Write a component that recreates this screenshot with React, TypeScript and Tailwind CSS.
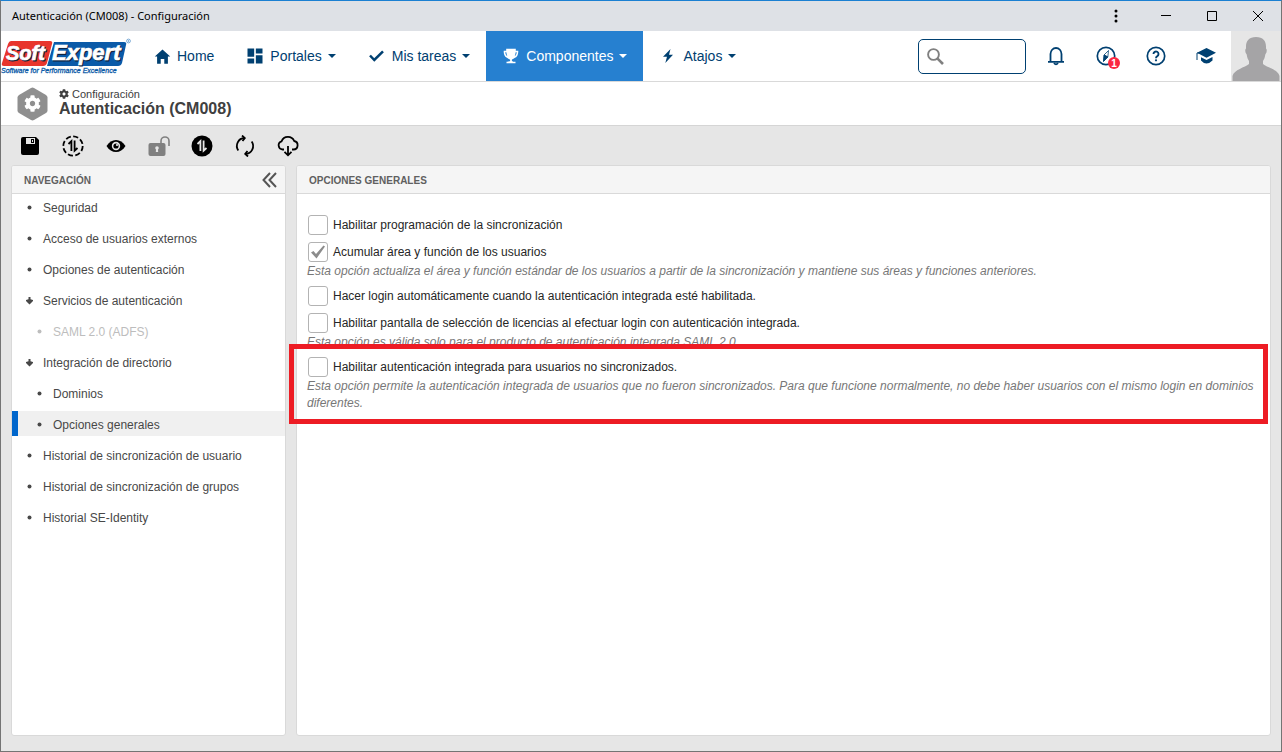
import * as React from "react";
import clsx from "clsx";
import { FaCog } from "react-icons/fa";
import { IoMdHome, IoMdTrophy } from "react-icons/io";
import { MdDashboard } from "react-icons/md";

type MenuItem = { label: string; icon: React.ReactNode; caret?: boolean; active?: boolean };
type NavItem = { label: string; sub?: boolean; open?: boolean; disabled?: boolean; active?: boolean };
type Option = { id: string; label: string; checked?: boolean; help?: string; highlight?: boolean };

const menu: MenuItem[] = [
  { label: "Home", icon: <IoMdHome size={19} /> },
  { label: "Portales", icon: <MdDashboard size={20} />, caret: true },
  {
    label: "Mis tareas",
    icon: (
      <svg width="15" height="12" viewBox="0 0 15 12" fill="none" stroke="currentColor" strokeWidth="2.5">
        <path d="M1 5.500l4.300 4.500L14 1.300" />
      </svg>
    ),
    caret: true,
  },
  { label: "Componentes", icon: <IoMdTrophy size={18} />, caret: true, active: true },
  {
    label: "Atajos",
    icon: (
      <svg width="10" height="14" viewBox="0 0 10 14" fill="currentColor">
        <path d="M7.500 0L0 7.800h4L2.300 14 10 5.800H6z" />
      </svg>
    ),
    caret: true,
  },
];

const navItems: NavItem[] = [
  { label: "Seguridad" },
  { label: "Acceso de usuarios externos" },
  { label: "Opciones de autenticación" },
  { label: "Servicios de autenticación", open: true },
  { label: "SAML 2.0 (ADFS)", sub: true, disabled: true },
  { label: "Integración de directorio", open: true },
  { label: "Dominios", sub: true },
  { label: "Opciones generales", sub: true, active: true },
  { label: "Historial de sincronización de usuario" },
  { label: "Historial de sincronización de grupos" },
  { label: "Historial SE-Identity" },
];

const options: Option[] = [
  { id: "schedule", label: "Habilitar programación de la sincronización" },
  {
    id: "accumulate",
    label: "Acumular área y función de los usuarios",
    checked: true,
    help: "Esta opción actualiza el área y función estándar de los usuarios a partir de la sincronización y mantiene sus áreas y funciones anteriores.",
  },
  { id: "autologin", label: "Hacer login automáticamente cuando la autenticación integrada esté habilitada." },
  {
    id: "license",
    label: "Habilitar pantalla de selección de licencias al efectuar login con autenticación integrada.",
    help: "Esta opción es válida solo para el producto de autenticación integrada SAML 2.0.",
  },
  {
    id: "unsynced",
    label: "Habilitar autenticación integrada para usuarios no sincronizados.",
    help: "Esta opción permite la autenticación integrada de usuarios que no fueron sincronizados. Para que funcione normalmente, no debe haber usuarios con el mismo login en dominios diferentes.",
    highlight: true,
  },
];

const tools: { label: string; disabled?: boolean; icon: React.ReactNode }[] = [
  {
    label: "Guardar",
    icon: (
      <svg width="20" height="20" viewBox="0 0 20 20">
        <path d="M3 1h13l3 3v13a2 2 0 0 1-2 2H3a2 2 0 0 1-2-2V3a2 2 0 0 1 2-2z" />
        <path d="M6 2h9v6H6z" fill="#e6e6e6" />
        <path d="M11 3h3v4h-3z" />
        <path d="M12 4h1v2h-1z" fill="#e6e6e6" />
      </svg>
    ),
  },
  {
    label: "Probar sincronización",
    icon: (
      <svg width="22" height="22" viewBox="0 0 22 22" fill="none" stroke="#000">
        <circle cx="11" cy="11" r="9.7" strokeWidth="1.8" strokeDasharray="5.2 2.4" />
        <path d="M6.500 9L9.400 6.200V16M12.600 5.500V15.700L15.500 13" strokeWidth="1.800" />
      </svg>
    ),
  },
  {
    label: "Visualizar",
    icon: (
      <svg width="20" height="14" viewBox="0 0 20 14">
        <path d="M0.500 7C3 3 6.300 1 10 1s7 2 9.500 6C17 11 13.700 13 10 13S3 11 .5 7z" />
        <circle cx="10" cy="7" r="4.200" fill="#e6e6e6" />
        <circle cx="10" cy="7" r="2.600" />
        <circle cx="11" cy="6" r="1.100" fill="#e6e6e6" />
      </svg>
    ),
  },
  {
    label: "Desbloquear",
    disabled: true,
    icon: (
      <svg width="22" height="20" viewBox="0 0 22 20">
        <path d="M13 8V5a4 4 0 0 1 8 0v5" fill="none" stroke="#808080" strokeWidth="1.600" />
        <rect x="0.500" y="7" width="17" height="13" rx="2" fill="#808080" />
        <circle cx="9" cy="12" r="1.800" fill="#e6e6e6" />
        <path d="M8.200 12h1.600l.4 4H7.800z" fill="#e6e6e6" />
      </svg>
    ),
  },
  {
    label: "Sincronizar",
    icon: (
      <svg width="22" height="22" viewBox="0 0 22 22">
        <circle cx="11" cy="11" r="10.500" />
        <path d="M6.500 9L9.400 6.200V16M12.600 5.500V15.700L15.500 13" fill="none" stroke="#e6e6e6" strokeWidth="1.800" />
      </svg>
    ),
  },
  {
    label: "Actualizar",
    icon: (
      <svg width="22" height="22" viewBox="0 0 22 22" fill="none" stroke="#000" strokeWidth="1.800">
        <path d="M4.300 15.500A8 8 0 0 1 10.500 3M17.700 6.500A8 8 0 0 1 11.500 19" />
        <path d="M8 .5L10.800 3 8.500 6M14 21.500L11.200 19l2.300-3" />
      </svg>
    ),
  },
  {
    label: "Descargar",
    icon: (
      <svg width="22" height="22" viewBox="0 0 22 22" fill="none" stroke="#000" strokeWidth="1.800">
        <path d="M7 14.500H5.500a4.200 4.200 0 0 1-.9-8.200A6.800 6.800 0 0 1 17.200 6a4.300 4.300 0 0 1-.7 8.500H15" />
        <path d="M11 11v9M7.500 16.800L11 20.300l3.500-3.500" />
      </svg>
    ),
  },
];

function TitleBar() {
  return (
    <div className="flex h-[30px] items-center bg-[#dee1e6] text-black">
      <h1 className="flex-1 pl-[11px] font-['Noto_Sans',sans-serif] text-[11px]">
        Autenticación (CM008) - Configuración
      </h1>
      <button aria-label="Menú" className="flex h-full w-[54px] items-center justify-center">
        <svg width="4" height="14" viewBox="0 0 4 14">
          <circle cx="2" cy="2" r="1.500" />
          <circle cx="2" cy="7" r="1.500" />
          <circle cx="2" cy="12" r="1.500" />
        </svg>
      </button>
      <button aria-label="Minimizar" className="flex h-full w-[46px] items-center justify-center">
        <svg width="10" height="10" viewBox="0 0 10 10">
          <path d="M0 4h10v1H0z" />
        </svg>
      </button>
      <button aria-label="Maximizar" className="flex h-full w-[46px] items-center justify-center">
        <svg width="10" height="10" viewBox="0 0 10 10" fill="none" stroke="#000">
          <path d="M.5.5h9v9h-9z" />
        </svg>
      </button>
      <button aria-label="Cerrar" className="flex h-full w-[46px] items-center justify-center">
        <svg width="10" height="10" viewBox="0 0 10 10" stroke="#000">
          <path d="M0 0l10 10M10 0L0 10" />
        </svg>
      </button>
    </div>
  );
}

function Logo() {
  return (
    <svg
      width="136"
      height="50"
      viewBox="1 31 136 50"
      role="img"
      aria-label="SoftExpert"
      fontFamily="Liberation Sans, sans-serif"
      fontStyle="italic"
    >
      <path d="M11 41h39q3 0 2 3l-5 19q-1 3-4 3H4q-3 0-2-3l6-19q1-3 3-3z" fill="#e8352c" />
      <path d="M54 42h70q3 0 2 3l-4 18q-1 3-4 3H47z" fill="#0a5aa8" />
      <g fontWeight="700" fill="#10233f" stroke="#10233f" strokeWidth="0.800">
        <text x="7" y="61" fontSize="20">Soft</text>
        <text x="53" y="61" fontSize="22">Expert</text>
      </g>
      <g fontWeight="700" fill="#fff" stroke="#fff" strokeWidth="0.700">
        <text x="6" y="60" fontSize="20">Soft</text>
        <text x="52" y="60" fontSize="22">Expert</text>
      </g>
      <text x="1" y="73" fontSize="7" fill="#0a5aa8" stroke="#0a5aa8" strokeWidth="0.300">
        Software for Performance Excellence
      </text>
      <circle cx="128.500" cy="41" r="1.900" fill="none" stroke="#4a8ac4" strokeWidth="0.700" />
      <circle cx="128.500" cy="41" r="0.700" fill="#4a8ac4" />
    </svg>
  );
}

function HeaderIcon({ label, children }: { label: string; children: React.ReactNode }) {
  return (
    <button aria-label={label} className="relative flex h-full w-[50px] items-center justify-center text-[#004071]">
      {children}
    </button>
  );
}

function Header() {
  return (
    <header className="flex h-[51px] items-stretch border-b border-[#d9d9d9] bg-white">
      <a href="#" className="w-[136px]">
        <Logo />
      </a>
      <nav className="flex flex-1 items-stretch">
        {menu.map((item) => (
          <a
            key={item.label}
            href="#"
            className={clsx(
              "flex items-center pr-4 pl-[17px] text-sm",
              item.active ? "bg-[#2680d0] text-white" : "text-[#004071]",
            )}
          >
            <span className="mr-[7px] flex w-4 justify-center [&>svg]:shrink-0">{item.icon}</span>
            {item.label}
            {item.caret && (
              <svg className="ml-1.5" width="8" height="4" viewBox="0 0 8 4" fill="currentColor">
                <path d="M0 0h8L4 4z" />
              </svg>
            )}
          </a>
        ))}
      </nav>
      <label className="mr-[5px] flex h-[35px] w-[108px] items-center self-center rounded-[5px] border border-[#004071] pl-2">
        <svg className="shrink-0" width="17" height="17" viewBox="0 0 17 17" fill="none" stroke="#808080">
          <circle cx="6.500" cy="6.500" r="5.400" strokeWidth="1.900" />
          <path d="M10.300 10.300l5.700 5.700" strokeWidth="2.600" />
        </svg>
        <input type="search" aria-label="Buscar" className="ml-1 w-full min-w-0 text-sm outline-none" />
      </label>
      <HeaderIcon label="Notificaciones">
        <svg width="18" height="20" viewBox="0 0 18 20" fill="none" stroke="currentColor" strokeWidth="1.800">
          <path d="M3.500 15.500V8a5.500 6 0 0 1 11 0v7.500M1 15.800h16" />
          <path d="M7 17q2 2.800 4 0" />
        </svg>
      </HeaderIcon>
      <HeaderIcon label="Explorar">
        <svg width="20" height="20" viewBox="0 0 20 20" fill="none" stroke="currentColor">
          <circle cx="10" cy="10" r="8.700" strokeWidth="1.700" />
          <path d="M12.500 4.500L11.800 11 8 9z" strokeWidth="0.800" />
          <path d="M7.500 15.500L8 9l3.800 2z" fill="currentColor" />
        </svg>
        <span className="absolute top-[26px] left-[27px] flex size-3 items-center justify-center rounded-full bg-[#fb2840] text-[10px] font-bold text-white">
          1
        </span>
      </HeaderIcon>
      <HeaderIcon label="Ayuda">
        <svg width="20" height="20" viewBox="0 0 20 20" fill="none" stroke="currentColor">
          <circle cx="10" cy="10" r="8.700" strokeWidth="1.700" />
          <path d="M7.500 8a2.500 2.500 0 1 1 3.800 2.100Q10 10.800 10 12.200" strokeWidth="1.900" />
          <circle cx="10" cy="14.300" r="1.100" fill="currentColor" stroke="none" />
        </svg>
      </HeaderIcon>
      <HeaderIcon label="Capacitación">
        <svg width="20" height="18" viewBox="0 0 20 18" fill="currentColor">
          <path d="M10.500 1L20 5.800l-9.500 5L1 5.800z" />
          <path d="M5 10.200l5.500 2.800 6-3v3.500q-3 3-6 3t-5.500-3z" />
          <path d="M.5 6h1v7h-1zM1 5.500h4v1H1z" />
        </svg>
      </HeaderIcon>
      <button aria-label="Usuario" className="w-[50px] bg-[#e6e6e6]">
        <svg width="50" height="50" viewBox="0 0 50 50" fill="#a5a4a6">
          <path d="M25 6c7 0 10 4 10 9.500v2c1.300 1 .8 4.500-.7 6-.5 3-1 4.500-2.300 6.500v3c4 3.500 15 5.500 16.500 12V50h-47v-5C3 38.500 14 36.500 18 33v-3c-1.300-2-1.800-3.500-2.300-6.500-1.500-1.500-2-5-.7-6v-2C15 10 18 6 25 6z" />
        </svg>
      </button>
    </header>
  );
}

function PageTitle() {
  return (
    <div className="flex h-11 items-center border-b border-[#d5d5d5] bg-white pl-4 text-[#404040]">
      <div className="grid w-[31px] place-items-center">
        <svg className="col-start-1 row-start-1" width="31" height="34" viewBox="0 0 31 34">
          <path
            d="M14 1q1.500-.8 3 0l12 7q1.500 1 1.500 2.500v13q0 1.500-1.500 2.500l-12 7q-1.500.8-3 0L2 26q-1.500-1-1.500-2.500v-13Q.5 9 2 8z"
            fill="#8f8f8f"
          />
        </svg>
        <FaCog className="col-start-1 row-start-1" size={17} color="#fff" />
      </div>
      <div className="ml-[11px] flex flex-col pb-[3px]">
        <span className="flex items-center gap-[3px] text-[11px] leading-3">
          <FaCog size={10} />
          Configuración
        </span>
        <h2 className="text-base leading-[17px] font-bold">Autenticación (CM008)</h2>
      </div>
    </div>
  );
}

function Toolbar() {
  return (
    <div className="flex h-[39px] pl-[7px]">
      {tools.map((tool) => (
        <button
          key={tool.label}
          aria-label={tool.label}
          disabled={tool.disabled}
          className="flex w-[43px] items-center justify-center"
        >
          {tool.icon}
        </button>
      ))}
    </div>
  );
}

function Panel({
  title,
  action,
  className,
  children,
}: {
  title: string;
  action?: React.ReactNode;
  className?: string;
  children: React.ReactNode;
}) {
  return (
    <section className={clsx("rounded-[3px] border border-[#d9d9d9] bg-white", className)}>
      <div className="flex h-7 items-center justify-between rounded-t-[2px] border-b border-[#d9d9d9] bg-[#f5f5f5] pr-2 pl-3">
        <h3 className="pt-0.5 text-[10px] font-bold text-[#606060]">{title}</h3>
        {action}
      </div>
      {children}
    </section>
  );
}

function NavRow({ item }: { item: NavItem }) {
  return (
    <li>
      <a
        href="#"
        className={clsx(
          "flex h-[25px] items-center border-l-[6px] pt-0.5 text-xs",
          item.sub ? "pl-[18px]" : "pl-2",
          item.active ? "border-[#0066cc] bg-[#f0f0f0]" : "border-transparent",
          item.disabled ? "text-[#bdbdbd]" : "text-[#484848]",
        )}
      >
        <svg className="mr-2.5 shrink-0" width="7" height="9" viewBox="0 0 7 9" fill="currentColor">
          {item.open ? <path d="M2.500 1h2v2.300L7 4v1L3.500 8.500 0 5V4l2.500-.7z" /> : <circle cx="3.500" cy="4.500" r="2" />}
        </svg>
        {item.label}
      </a>
    </li>
  );
}

function OptionRow({ option }: { option: Option }) {
  return (
    <div className="relative pb-[7px]">
      <div className="flex h-5 items-center pl-px">
        <span className="grid place-items-center">
          <input
            id={option.id}
            type="checkbox"
            defaultChecked={option.checked}
            className="peer col-start-1 row-start-1 size-5 appearance-none rounded-[3px] border border-[#b3b3b3] bg-white"
          />
          <svg
            className="pointer-events-none invisible col-start-1 row-start-1 peer-checked:visible"
            width="14"
            height="14"
            viewBox="0 0 14 14"
            fill="#8c8c8c"
          >
            <path d="M0 7.500l2.500-1.500L5 9 12.500.5 14 1.500 5.500 13.500z" />
          </svg>
        </span>
        <label htmlFor={option.id} className="pl-[5px] text-xs text-[#262626]">
          {option.label}
        </label>
      </div>
      {option.help && <p className="mt-px -mb-px text-xs leading-[17px] text-[#777] italic">{option.help}</p>}
      {option.highlight && (
        <div className="pointer-events-none absolute -top-[13px] -right-2.5 -bottom-1.5 -left-[18px] border-[5px] border-[#ed1c24]" />
      )}
    </div>
  );
}

export default function App() {
  return (
    <div className="flex min-h-screen flex-col border border-[#747474] border-t-[#1b80d2] bg-[#e6e6e6] font-['Liberation_Sans',Arial,sans-serif]">
      <TitleBar />
      <Header />
      <PageTitle />
      <Toolbar />
      <main className="flex flex-1 gap-2.5 px-2.5 pb-[15px]">
        <Panel
          title="NAVEGACIÓN"
          className="w-[275px] shrink-0"
          action={
            <button aria-label="Contraer">
              <svg width="15" height="16" viewBox="0 0 15 16" fill="none" stroke="#555" strokeWidth="2">
                <path d="M8 1L1.500 8 8 15M14 1L7.500 8l6.500 7" />
              </svg>
            </button>
          }
        >
          <ul className="flex flex-col gap-1.5">
            {navItems.map((item) => (
              <NavRow key={item.label} item={item} />
            ))}
          </ul>
        </Panel>
        <Panel title="OPCIONES GENERALES" className="min-w-0 flex-1">
          <div className="pt-[21px] pr-3 pl-2.5">
            {options.map((option) => (
              <OptionRow key={option.id} option={option} />
            ))}
          </div>
        </Panel>
      </main>
    </div>
  );
}
